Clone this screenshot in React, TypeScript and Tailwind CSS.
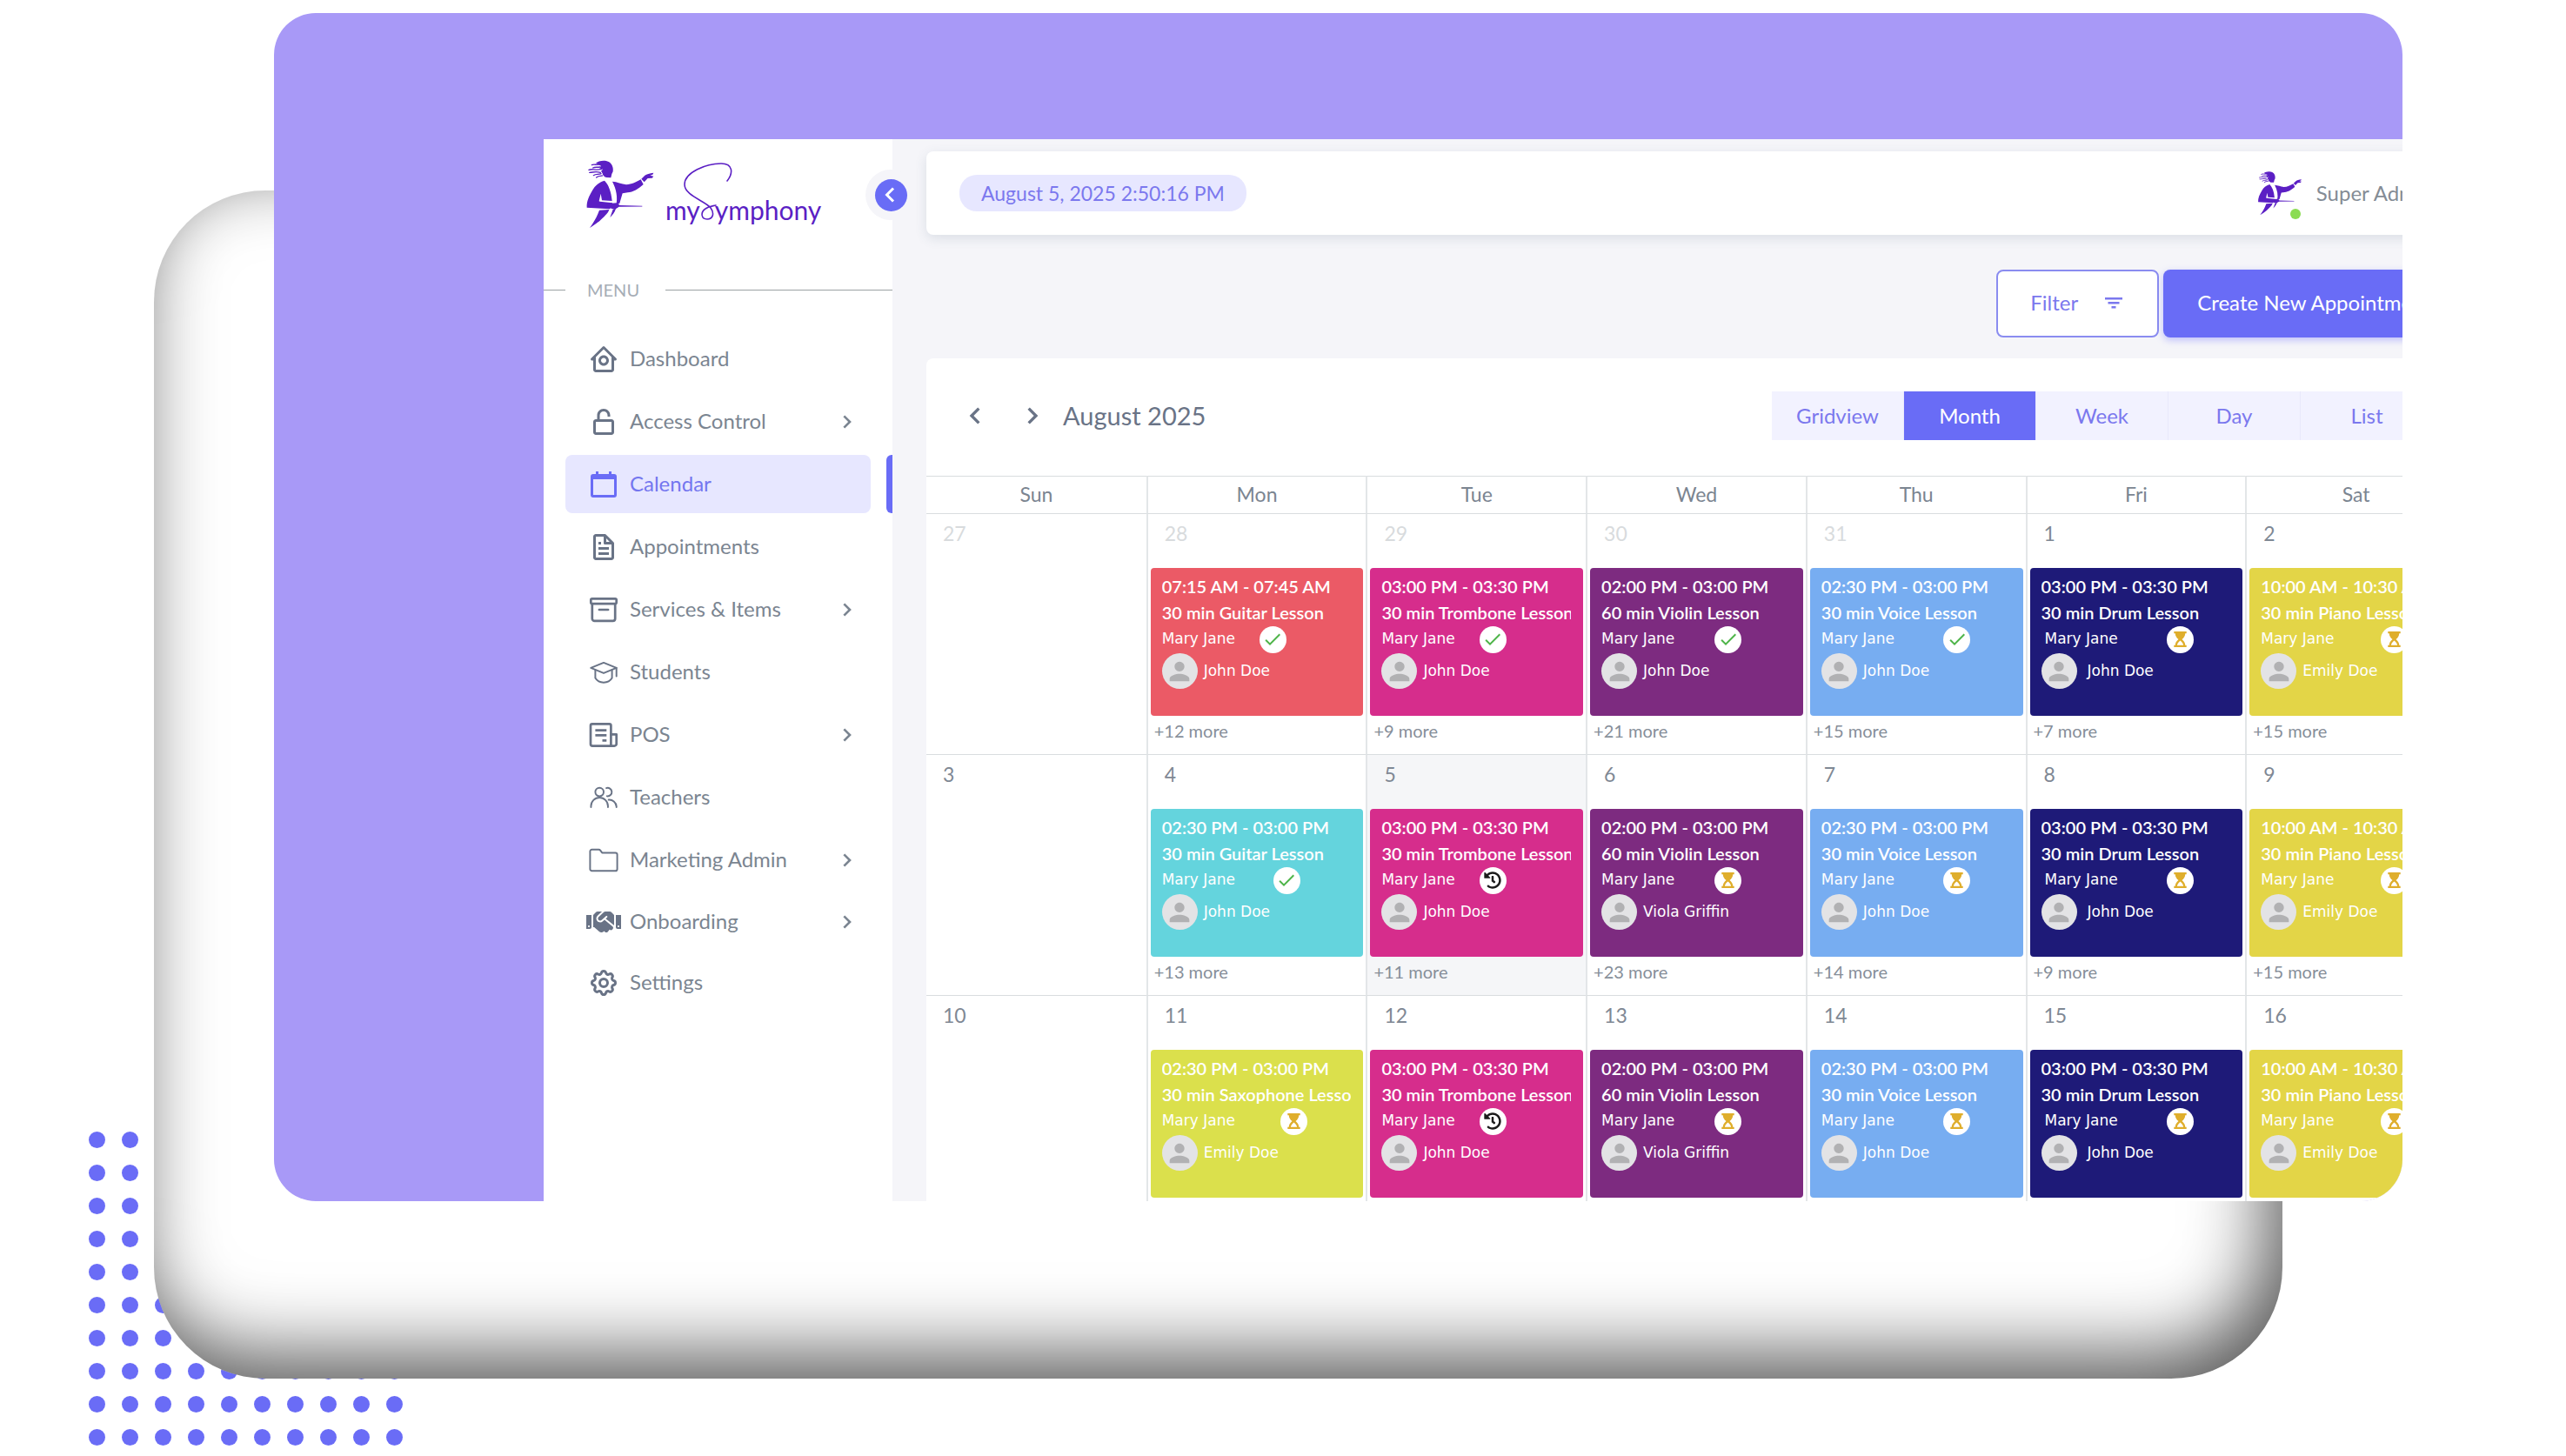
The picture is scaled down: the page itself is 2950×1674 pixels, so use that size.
import type { ComponentType, ReactNode } from "react"
import { BiChevronLeft, BiChevronRight, BiFile, BiHomeCircle, BiLockOpenAlt } from "react-icons/bi"
import { FaHandshake, FaHistory } from "react-icons/fa"
import { MdCheck, MdPerson } from "react-icons/md"
import { TbSettings } from "react-icons/tb"
import { clsx } from "clsx"

type IconType = ComponentType<{ className?: string }>
type Status = "done" | "pending" | "rescheduled"

interface Lesson {
  time: string
  title: string
  student: string
  color: string
  status: Status
  badgeGap: string
  more?: string
  indent?: boolean
}

interface Day {
  date: number
  muted?: boolean
  today?: boolean
  lesson?: Lesson
}

interface StrokeIconProps {
  className?: string
  width?: number
  children: ReactNode
}

function StrokeIcon({ className, width = 1.3, children }: StrokeIconProps) {
  return (
    <svg
      viewBox="0 0 24 24"
      fill="none"
      stroke="currentColor"
      strokeWidth={width}
      strokeLinecap="round"
      strokeLinejoin="round"
      className={className}
      aria-hidden="true"
    >
      {children}
    </svg>
  )
}

function CalendarIcon({ className }: { className?: string }) {
  return (
    <svg viewBox="0 0 24 24" fill="currentColor" className={className} aria-hidden="true">
      <path d="M20 4h-2V2h-2v2H8V2H6v2H4a2 2 0 0 0-2 2v14a2 2 0 0 0 2 2h16a2 2 0 0 0 2-2V6a2 2 0 0 0-2-2zm0 16H4V8h16z" />
    </svg>
  )
}

function ArchiveIcon({ className }: { className?: string }) {
  return (
    <StrokeIcon className={className} width={1.8}>
      <rect x="2.2" y="3.600" width="19.600" height="3.800" rx="1" />
      <path d="M3.200 7.600v11.200a1.800 1.800 0 0 0 1.800 1.800h14a1.800 1.800 0 0 0 1.800-1.800V7.600" />
      <path d="M8.600 12h6.800" />
    </StrokeIcon>
  )
}

function ReceiptIcon({ className }: { className?: string }) {
  return (
    <StrokeIcon className={className} width={1.8}>
      <path d="M17.600 20.400H3.400a1.400 1.400 0 0 1-1.400-1.400V4.800a1.200 1.200 0 0 1 1.200-1.200h13.200a1.200 1.200 0 0 1 1.200 1.200z" />
      <path d="M17.600 11.600h4.200v7.200a1.600 1.600 0 0 1-1.600 1.600h-2.600" />
      <path strokeLinecap="butt" d="M5.600 8.400h8.600M5.600 12.200h8.600M11 16.200h3.200" />
    </StrokeIcon>
  )
}

function StudentsIcon({ className }: { className?: string }) {
  return (
    <StrokeIcon className={className}>
      <path d="M2.200 8.600 12 4.600l9.800 4L12 12.600z" />
      <path d="M5.600 10.200v6.200c1.300 2.200 3.600 3.400 6.400 3.400s5.100-1.200 6.400-3.400v-6.200" />
      <path d="M21.800 8.600v6.400" />
    </StrokeIcon>
  )
}

function TeachersIcon({ className }: { className?: string }) {
  return (
    <StrokeIcon className={className}>
      <circle cx="8.800" cy="7.700" r="3.200" />
      <path d="M2.300 19.300v-.800a6.500 6.500 0 0 1 13 0v.800" />
      <path d="M14 4.700a3.200 3.200 0 1 1 .6 6.200" />
      <path d="M15.800 13.700a5.500 5.500 0 0 1 6 5v.600" />
    </StrokeIcon>
  )
}

function FolderIcon({ className }: { className?: string }) {
  return (
    <StrokeIcon className={className}>
      <path d="M1.600 5.200a1.400 1.400 0 0 1 1.400-1.400h5.200c.5 0 .9.200 1.200.600l1.400 1.900H21a1.400 1.400 0 0 1 1.400 1.400v11.100a1.400 1.400 0 0 1-1.400 1.400H3a1.400 1.400 0 0 1-1.400-1.400z" />
    </StrokeIcon>
  )
}

function FilterIcon({ className }: { className?: string }) {
  return (
    <svg viewBox="0 0 20 14" fill="currentColor" className={className} aria-hidden="true">
      <path d="M0 1h20v2.600H0zM3.500 6h13v2.600h-13zM7.500 11h5v2.600h-5z" />
    </svg>
  )
}

function HourglassIcon({ className }: { className?: string }) {
  return (
    <svg viewBox="0 0 16 20" fill="currentColor" className={className} aria-hidden="true">
      <path d="M0 0h16v2.400h-1.600c0 3.200-1.800 5.600-4.200 7.600 2.400 2 4.200 4.400 4.200 7.600H16V20H0v-2.400h1.600c0-3.200 1.800-5.600 4.200-7.600C3.400 8 1.600 5.600 1.600 2.400H0zM4 17.600h8c-.4-2.400-1.800-4.400-4-6-2.200 1.600-3.600 3.600-4 6z" />
    </svg>
  )
}

function Conductor({ className }: { className?: string }) {
  return (
    <svg viewBox="0 0 240 240" className={className} fill="#5b1fc4" aria-hidden="true">
      {/* head and loose hair */}
      <path d="M36 14C44 6 66 2 80 9c12 6 17 20 15 34l-4 8-3 13-16-1c-8-2-13-8-13-14l-5-8 6-6-12-4 6-8-10-4z" />
      <path
        d="M22 20c9-5 16 2 26-2M12 37c12-6 20 4 44-3M26 30c7-4 15-1 24-3M14 46c12 0 20-5 38 0M28 56c8-6 18-2 26-6M38 63c5-5 10-5 20-6"
        fill="none"
        stroke="#5b1fc4"
        strokeWidth="4"
        strokeLinecap="round"
      />
      {/* back and bent arm */}
      <path d="M66 74C46 80 34 90 24 108 12 128 4 146 5 167l78 5 10-7v-14l-43-5-3-1 6-26 4 23 35 2c-3-32-12-56-26-70z" />
      {/* front of the jacket and stretched arm */}
      <path d="M93 77c16 1 32 9 48 11 18-1 36-10 50-18l9 17c-16 14-36 28-54 28l-18 3-10 34-12 6c6-26 1-54-13-81z" />
      <path d="M193 68l12-12c6-4 16-7 30-9l-3 6-9 3 12 3-5 6-15 1-12 13z" />
      {/* hand and baton */}
      <path d="M88 152l22-1 8 8 78 2.500v2l-80 1-14 9-14-3z" />
      {/* coat tails */}
      <path d="M48 176l34-2c-4 14-20 26-32 38-10 8-22 17-35 25 14-20 24-36 33-61zM85 201l10-28 10-3c-4 14-11 22-20 31z" />
    </svg>
  )
}

function Wordmark() {
  return (
    <span className="mb-[7px] flex items-baseline text-[30px] leading-none text-[#5b1fc4]">
      my
      <span className="relative h-0 w-[17px]">
        <svg
          viewBox="0 0 56 66"
          className="absolute bottom-0 -left-[19px] h-[66px] w-14"
          fill="none"
          stroke="currentColor"
          strokeWidth="1.600"
          strokeLinecap="round"
          aria-hidden="true"
        >
          <path d="M50 21C57 12 57 1 43 1C26 1 1 11 1 25C1 38 25 44 31 52C36 59 33 65 27 65C20 65 19 57 25 53C29 50 33 50 37 49" />
        </svg>
      </span>
      ymphony
    </span>
  )
}

const menu: { label: string; icon: IconType; nested?: boolean; active?: boolean; compact?: boolean }[] = [
  { label: "Dashboard", icon: BiHomeCircle },
  { label: "Access Control", icon: BiLockOpenAlt, nested: true },
  { label: "Calendar", icon: CalendarIcon, active: true },
  { label: "Appointments", icon: BiFile },
  { label: "Services & Items", icon: ArchiveIcon, nested: true },
  { label: "Students", icon: StudentsIcon },
  { label: "POS", icon: ReceiptIcon, nested: true },
  { label: "Teachers", icon: TeachersIcon },
  { label: "Marketing Admin", icon: FolderIcon, nested: true },
  { label: "Onboarding", icon: FaHandshake, nested: true, compact: true },
  { label: "Settings", icon: TbSettings, compact: true },
]

function Sidebar() {
  return (
    <aside className="relative w-[401px] shrink-0 bg-white">
      <a href="#" aria-label="mySymphony" className="flex h-[108px] items-end gap-3 pb-[5px] pl-12">
        <Conductor className="size-20" />
        <Wordmark />
      </a>

      <button
        aria-label="Collapse menu"
        className="absolute top-[35px] -right-[27px] flex size-[58px] items-center justify-center rounded-full bg-[#f5f5f9]"
      >
        <span className="flex size-[37px] items-center justify-center rounded-full bg-[#696cf6] text-white">
          <BiChevronLeft className="size-9" />
        </span>
      </button>

      <div className="mt-[51px] flex h-7 items-center text-xl text-[#a6adb6]">
        <span className="h-px w-[25px] bg-[#9ba1a3]" />
        <span className="w-[115px] pl-[25px]">MENU</span>
        <span className="h-px flex-1 bg-[#9ba1a3]" />
      </div>

      <nav className="mt-8 flex flex-col gap-[5px]">
        {menu.map(({ label, icon: Icon, nested, active, compact }) => (
          <div key={label} className="flex justify-between pl-[25px]">
            <a
              href="#"
              className={clsx(
                "flex w-[351px] items-center rounded-lg pr-3 pl-[26px] text-2xl",
                compact ? "h-[65px]" : "h-[67px]",
                active ? "bg-[#e7e7ff] text-[#7476ef]" : "text-[#7b8591]"
              )}
            >
              <span className="flex w-9 justify-center">
                <Icon
                  className={clsx(
                    "shrink-0",
                    label === "Onboarding" ? "size-10" : "size-9",
                    active ? "text-[#6a6cf6]" : "text-[#697386]"
                  )}
                />
              </span>
              <span className="ml-3 flex-1 pb-0.5">{label}</span>
              {nested && <BiChevronRight className="size-8" />}
            </a>
            {active && <span className="w-[7px] rounded-l-md bg-[#696cf6]" />}
          </div>
        ))}
      </nav>
    </aside>
  )
}

const trombone: Lesson = {
  time: "03:00 PM - 03:30 PM",
  title: "30 min Trombone Lesson",
  student: "John Doe",
  color: "bg-[#d62d8c]",
  status: "rescheduled",
  badgeGap: "ml-7",
}
const violin: Lesson = {
  time: "02:00 PM - 03:00 PM",
  title: "60 min Violin Lesson",
  student: "Viola Griffin",
  color: "bg-[#7d2b80]",
  status: "pending",
  badgeGap: "ml-[46px]",
}
const voice: Lesson = {
  time: "02:30 PM - 03:00 PM",
  title: "30 min Voice Lesson",
  student: "John Doe",
  color: "bg-[#77adf1]",
  status: "pending",
  badgeGap: "ml-14",
}
const drum: Lesson = {
  time: "03:00 PM - 03:30 PM",
  title: "30 min Drum Lesson",
  student: "John Doe",
  color: "bg-[#1e1a78]",
  status: "pending",
  badgeGap: "ml-14",
  indent: true,
}
const piano: Lesson = {
  time: "10:00 AM - 10:30 AM",
  title: "30 min Piano Lesson",
  student: "Emily Doe",
  color: "bg-[#e3d547]",
  status: "pending",
  badgeGap: "ml-[54px]",
}

const weeks: Day[][] = [
  [
    { date: 27, muted: true },
    {
      date: 28,
      muted: true,
      lesson: {
        time: "07:15 AM - 07:45 AM",
        title: "30 min Guitar Lesson",
        student: "John Doe",
        color: "bg-[#eb5a66]",
        status: "done",
        badgeGap: "ml-7",
        more: "+12 more",
      },
    },
    { date: 29, muted: true, lesson: { ...trombone, status: "done", more: "+9 more" } },
    { date: 30, muted: true, lesson: { ...violin, student: "John Doe", status: "done", more: "+21 more" } },
    { date: 31, muted: true, lesson: { ...voice, status: "done", more: "+15 more" } },
    { date: 1, lesson: { ...drum, more: "+7 more" } },
    { date: 2, lesson: { ...piano, more: "+15 more" } },
  ],
  [
    { date: 3 },
    {
      date: 4,
      lesson: {
        time: "02:30 PM - 03:00 PM",
        title: "30 min Guitar Lesson",
        student: "John Doe",
        color: "bg-[#64d4dd]",
        status: "done",
        badgeGap: "ml-11",
        more: "+13 more",
      },
    },
    { date: 5, today: true, lesson: { ...trombone, more: "+11 more" } },
    { date: 6, lesson: { ...violin, more: "+23 more" } },
    { date: 7, lesson: { ...voice, more: "+14 more" } },
    { date: 8, lesson: { ...drum, more: "+9 more" } },
    { date: 9, lesson: { ...piano, more: "+15 more" } },
  ],
  [
    { date: 10 },
    {
      date: 11,
      lesson: {
        time: "02:30 PM - 03:00 PM",
        title: "30 min Saxophone Lesson",
        student: "Emily Doe",
        color: "bg-[#dbe04c]",
        status: "pending",
        badgeGap: "ml-[52px]",
      },
    },
    { date: 12, lesson: trombone },
    { date: 13, lesson: violin },
    { date: 14, lesson: voice },
    { date: 15, lesson: drum },
    { date: 16, lesson: piano },
  ],
]

function StatusBadge({ status }: { status: Status }) {
  return (
    <span className="flex size-[31px] shrink-0 items-center justify-center rounded-full bg-white">
      {status === "done" && <MdCheck className="size-6 text-[#4fb54a]" />}
      {status === "pending" && <HourglassIcon className="h-[18px] w-[15px] text-[#dfae2c]" />}
      {status === "rescheduled" && <FaHistory className="size-5 text-[#1c1c1c]" />}
    </span>
  )
}

function LessonCard({ lesson }: { lesson: Lesson }) {
  return (
    <div className={clsx("h-[170px] overflow-hidden rounded-sm pt-1.5 pr-3.5 pl-[13px] text-white", lesson.color)}>
      <p className="overflow-hidden text-xl leading-[30px] font-semibold whitespace-nowrap">{lesson.time}</p>
      <p className="overflow-hidden text-xl leading-[30px] font-semibold whitespace-nowrap">{lesson.title}</p>
      <div className="flex h-8 items-center font-['DejaVu_Sans',sans-serif] text-[17px] whitespace-nowrap">
        <span className={clsx(lesson.indent && "ml-1")}>Mary Jane</span>
        <span className={lesson.badgeGap}>
          <StatusBadge status={lesson.status} />
        </span>
      </div>
      <div className="flex items-center font-['DejaVu_Sans',sans-serif] text-[17px]">
        <span className="flex size-[41px] items-center justify-center rounded-full bg-[#e3e3e5] text-[#b1b1b3]">
          <MdPerson className="size-[34px]" />
        </span>
        <span className={lesson.indent ? "ml-3" : "ml-[7px]"}>{lesson.student}</span>
      </div>
    </div>
  )
}

function MonthGrid() {
  return (
    <table className="w-full table-fixed border-separate border-spacing-0">
      <thead>
        <tr>
          {["Sun", "Mon", "Tue", "Wed", "Thu", "Fri", "Sat"].map((day) => (
            <th
              key={day}
              className="h-[43px] border-t border-l-2 border-t-[#d9dddf] border-l-[#e3e6e8] pb-0.5 text-[23px] leading-none font-normal text-[#7b8591] first:border-l-0"
            >
              {day}
            </th>
          ))}
        </tr>
      </thead>
      <tbody>
        {weeks.map((week) => (
          <tr key={week[0].date}>
            {week.map((day) => (
              <td
                key={day.date}
                className={clsx(
                  "border-t border-l-2 border-t-[#d9dddf] border-l-[#e3e6e8] px-[3px] pb-1 align-top first:border-l-0",
                  day.today && "bg-[#f5f6f8]"
                )}
              >
                <p
                  className={clsx(
                    "h-[62px] px-4 pt-1.5 text-[23px] leading-8",
                    day.muted ? "text-[#d8dbdd]" : "text-[#7f8894]"
                  )}
                >
                  {day.date}
                </p>
                {day.lesson && <LessonCard lesson={day.lesson} />}
                {day.lesson?.more && (
                  <a href="#" className="mb-1.5 flex h-[34px] items-center px-1 text-xl text-[#868e99]">
                    {day.lesson.more}
                  </a>
                )}
              </td>
            ))}
          </tr>
        ))}
      </tbody>
    </table>
  )
}

function Topbar() {
  return (
    <header className="flex h-24 items-center justify-between rounded-lg bg-white pr-[37px] pl-[38px] shadow-[0_4px_14px_rgba(67,89,113,0.14)]">
      <time className="flex h-[42px] items-center rounded-[20px] bg-[#e7e7ff] px-[25px] text-[23px] text-[#7b78ee]">
        August 5, 2025 2:50:16 PM
      </time>
      <div className="flex items-center gap-4 text-2xl text-[#848c95]">
        <span className="relative">
          <Conductor className="size-[52px]" />
          <span className="absolute right-0.5 -bottom-1 size-3 rounded-full bg-[#8bdc52]" />
        </span>
        Super Admin
      </div>
    </header>
  )
}

function CalendarCard() {
  return (
    <section className="rounded-t-lg bg-white">
      <div className="flex items-center justify-between pt-[38px] pr-[37px] pb-[41px] pl-[37px]">
        <div className="flex items-center text-[#697386]">
          <button aria-label="Previous month">
            <BiChevronLeft className="size-10" />
          </button>
          <button aria-label="Next month" className="ml-6">
            <BiChevronRight className="size-10" />
          </button>
          <h2 className="ml-4 text-[29px] leading-10">August 2025</h2>
        </div>
        <div className="flex divide-x divide-[#e9e9fb] bg-[#f2f2ff]">
          {["Gridview", "Month", "Week", "Day", "List"].map((view) => (
            <button
              key={view}
              className={clsx(
                "h-14 w-38 text-2xl",
                view === "Month" ? "bg-[#696cf6] text-white" : "text-[#7b78ee]"
              )}
            >
              {view}
            </button>
          ))}
        </div>
      </div>
      <MonthGrid />
    </section>
  )
}

function DotGrid() {
  return (
    <div className="absolute bottom-3 left-[102px] grid grid-cols-10 gap-[19px]" aria-hidden="true">
      {Array.from({ length: 100 }, (_, i) => (
        <span key={i} className="size-[19px] rounded-full bg-[#6a6cf6]" />
      ))}
    </div>
  )
}

export default function App() {
  return (
    <div className="relative min-h-screen overflow-hidden bg-white pt-[15px] pr-[188px] pb-[293px] pl-[315px] font-[Lato,'Open_Sans',sans-serif]">
      <DotGrid />
      <div className="relative">
        {/* raised plate behind the app window */}
        <div className="absolute top-[204px] right-[138px] -bottom-[204px] -left-[138px] rounded-[128px] bg-white shadow-[inset_-18px_-28px_88px_rgba(0,0,0,0.65)]" />

        <div className="relative overflow-hidden rounded-[48px] bg-[#a899f7] pt-[145px] pl-[310px]">
          <div className="-mr-[112px] flex bg-[#f5f5f9]">
            <Sidebar />
            <main className="flex-1 pt-3.5 pr-10 pl-[39px]">
              <Topbar />
              <div className="mt-10 mb-6 flex justify-end gap-[5px] text-2xl">
                <button className="flex h-[78px] items-center rounded-lg border-2 border-[#8a8cf0] bg-white pr-10 pb-0.5 pl-[37px] text-[#7b78ee]">
                  Filter
                  <FilterIcon className="ml-[31px] h-3.5 w-5" />
                </button>
                <button className="h-[78px] rounded-lg bg-[#696cf6] px-[39px] pb-0.5 text-white shadow-[0_3px_8px_rgba(105,108,255,0.4)]">
                  Create New Appointment
                </button>
              </div>
              <CalendarCard />
            </main>
          </div>
        </div>
      </div>
    </div>
  )
}
